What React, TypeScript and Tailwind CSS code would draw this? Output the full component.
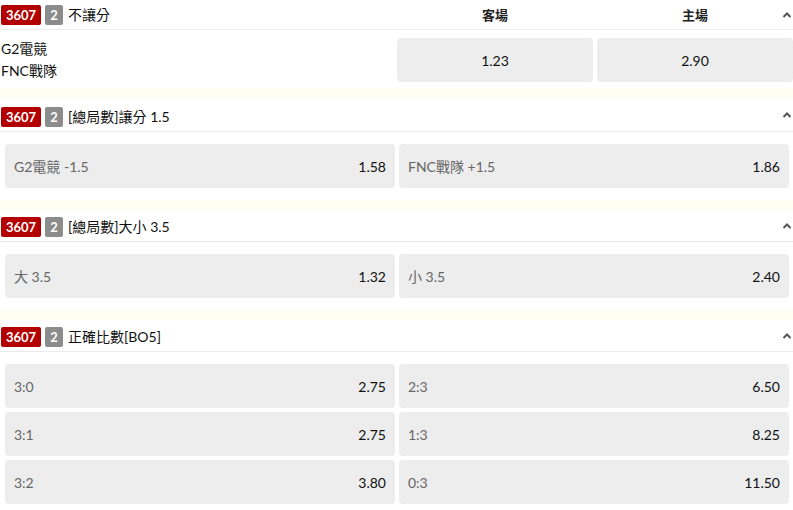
import React from "react";

interface Pick {
  label: string;
  odds: string;
}

interface Market {
  title: string;
  headerPt: string;
  picks: Pick[];
}

const markets: Market[] = [
  {
    title: "[總局數]讓分 1.5",
    headerPt: "pt-[9px]",
    picks: [
      { label: "G2電競 -1.5", odds: "1.58" },
      { label: "FNC戰隊 +1.5", odds: "1.86" },
    ],
  },
  {
    title: "[總局數]大小 3.5",
    headerPt: "pt-[7px]",
    picks: [
      { label: "大 3.5", odds: "1.32" },
      { label: "小 3.5", odds: "2.40" },
    ],
  },
  {
    title: "正確比數[BO5]",
    headerPt: "pt-[7px]",
    picks: [
      { label: "3:0", odds: "2.75" },
      { label: "2:3", odds: "6.50" },
      { label: "3:1", odds: "2.75" },
      { label: "1:3", odds: "8.25" },
      { label: "3:2", odds: "3.80" },
      { label: "0:3", odds: "11.50" },
    ],
  },
];

const Chevron = () => (
  <svg
    width="10"
    height="7"
    viewBox="0 0 10 7"
    className="absolute right-[1px] top-1/2 -translate-y-1/2"
  >
    <polyline
      points="1.5,5.5 5,2 8.5,5.5"
      fill="none"
      stroke="#555"
      strokeWidth="2"
    />
  </svg>
);

const Badges: React.FC<{ title: string }> = ({ title }) => (
  <div className="flex items-center h-[20px]">
    <span className="h-[20px] w-[40px] flex items-center justify-center rounded-[2px] bg-[#b30000] text-white text-[13px] leading-[20px] font-bold">
      3607
    </span>
    <span className="ml-[4px] h-[20px] w-[18px] flex items-center justify-center rounded-[2px] bg-[#8c8c8c] text-white text-[13px] leading-[20px] font-bold">
      2
    </span>
    <span className="ml-[5px] text-[14px] leading-[20px] text-[#111]">
      {title}
    </span>
  </div>
);

const Cream = () => <div className="h-[10px] bg-[#fffcf0]" />;

const PickButton: React.FC<{ pick: Pick }> = ({ pick }) => (
  <div className="h-[44px] flex items-center justify-between rounded-[4px] bg-[#ededed] px-[9px] text-[14px]">
    <span className="text-[#666]">{pick.label}</span>
    <span className="text-[#111]">{pick.odds}</span>
  </div>
);

const MarketBlock: React.FC<{ market: Market }> = ({ market }) => (
  <div>
    <Cream />
    <div
      className={`relative pl-[1px] pb-[4px] border-b border-[#e9e9ef] ${market.headerPt}`}
    >
      <Badges title={market.title} />
      <Chevron />
    </div>
    <div className="grid grid-cols-2 gap-[4px] pl-[5px] pr-[4px] pt-[12px] pb-[12px]">
      {market.picks.map((p) => (
        <PickButton key={p.label} pick={p} />
      ))}
    </div>
  </div>
);

export default function App() {
  return (
    <div
      className="w-[793px] h-[510px] overflow-hidden bg-white"
      style={{ fontFamily: "Lato, 'Noto Sans CJK TC', sans-serif" }}
    >
      <div className="relative flex items-center h-[30px] pl-[1px] pt-[1px] border-b border-[#ececec]">
        <div className="flex-1">
          <Badges title="不讓分" />
        </div>
        <div className="w-[196px] text-center text-[13px] leading-[20px] font-bold text-[#222]">
          客場
        </div>
        <div className="ml-[4px] w-[196px] text-center text-[13px] leading-[20px] font-bold text-[#222]">
          主場
        </div>
        <Chevron />
      </div>
      <div className="flex items-center pt-[8px] pb-[6px]">
        <div className="flex-1 pl-[1px] text-[14px] leading-[22px] text-[#111]">
          <div>G2電競</div>
          <div>FNC戰隊</div>
        </div>
        <div className="w-[196px] h-[44px] flex items-center justify-center rounded-[4px] bg-[#ededed] text-[14px] text-[#111]">
          1.23
        </div>
        <div className="ml-[4px] w-[196px] h-[44px] flex items-center justify-center rounded-[4px] bg-[#ededed] text-[14px] text-[#111]">
          2.90
        </div>
      </div>
      {markets.map((m) => (
        <MarketBlock key={m.title} market={m} />
      ))}
    </div>
  );
}
